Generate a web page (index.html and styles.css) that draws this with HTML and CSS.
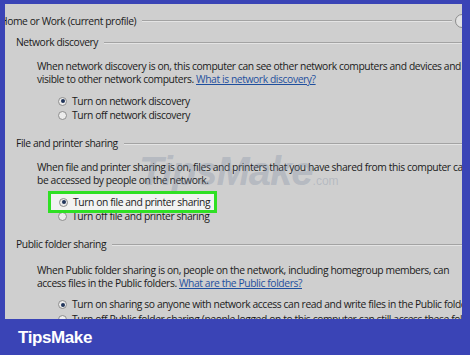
FILE: index.html
```html
<!DOCTYPE html>
<html lang="en">
<head>
    <meta charset="UTF-8">
    <title>Advanced sharing settings</title>
    <link rel="stylesheet" href="styles.css">
</head>
<body>
    <div class="frame">
        <div class="panel">
            <div class="profile-head">
                <span class="profile-title">Home or Work (current profile)</span>
                <span class="rule"></span>
                <span class="collapse"></span>
            </div>

            <div class="section">
                <div class="section-head">
                    <span>Network discovery</span>
                    <span class="rule"></span>
                </div>
                <p class="desc">When network discovery is on, this computer can see other network computers and devices and is<br>visible to other network computers. <a href="#">What is network discovery?</a></p>
                <div class="options">
                    <label class="option"><span class="radio checked"></span>Turn on network discovery</label>
                    <label class="option"><span class="radio"></span>Turn off network discovery</label>
                </div>
            </div>

            <div class="section">
                <div class="section-head">
                    <span>File and printer sharing</span>
                    <span class="rule"></span>
                </div>
                <p class="desc">When file and printer sharing is on, files and printers that you have shared from this computer can<br>be accessed by people on the network.</p>
                <div class="options tight">
                    <label class="option highlight"><span class="radio checked"></span>Turn on file and printer sharing</label>
                    <label class="option"><span class="radio"></span>Turn off file and printer sharing</label>
                </div>
                <div class="watermark">TipsMake<small>.com</small></div>
            </div>

            <div class="section public">
                <div class="section-head">
                    <span>Public folder sharing</span>
                    <span class="rule"></span>
                </div>
                <p class="desc">When Public folder sharing is on, people on the network, including homegroup members, can<br>access files in the Public folders. <a href="#">What are the Public folders?</a></p>
                <div class="options">
                    <label class="option"><span class="radio checked"></span>Turn on sharing so anyone with network access can read and write files in the Public folders</label>
                    <label class="option"><span class="radio"></span>Turn off Public folder sharing (people logged on to this computer can still access these folders)</label>
                </div>
            </div>
        </div>
    </div>
    <div class="brand">TipsMake</div>
</body>
</html>
```

FILE: styles.css
```css
* {
    margin: 0;
    padding: 0;
    box-sizing: border-box;
}

body {
    background: #3a44b6;
    font-family: 'Open Sans', 'Noto Sans', sans-serif;
    font-size: 10.3px;
    letter-spacing: -0.4px;
    line-height: 13px;
    color: #1b1b1b;
    width: 470px;
    height: 355px;
    overflow: hidden;
}

.frame {
    padding: 4px 8px 0 5px;
}

.panel {
    position: relative;
    height: 315px;
    background: #cfcfcf;
    overflow: hidden;
    padding-top: 10px;
}

.profile-head {
    display: flex;
    align-items: center;
    margin-left: -5px;
    white-space: nowrap;
}

.profile-title {
    padding-right: 6px;
}

.rule {
    flex: 1;
    height: 2px;
    border-top: 1px solid #a3a3a3;
    border-bottom: 1px solid #e4e4e4;
}

.collapse {
    width: 14px;
    height: 14px;
    margin-left: 3px;
    margin-right: -7px;
    border: 1px solid #8c8c8c;
    border-radius: 50%;
    background: #e2e2e2;
}

.section {
    position: relative;
    padding-left: 11px;
}

.section-head {
    display: flex;
    align-items: center;
    white-space: nowrap;
    margin-top: 8px;
}

.section-head span:first-child {
    padding-right: 6px;
}

.section + .section .section-head {
    margin-top: 15px;
}

.desc {
    margin: 11px 0 0 21px;
    white-space: nowrap;
}

.desc a {
    color: #1f4f9e;
    text-decoration: underline;
}

.options {
    margin: 8px 0 0 42px;
    display: flex;
    flex-direction: column;
}

.options.tight {
    margin-top: 8px;
}

.public .desc {
    margin-top: 13px;
}

.public .options {
    margin-top: 7px;
}

.public .option {
    height: 15px;
}

.option {
    display: flex;
    align-items: center;
    height: 14px;
    white-space: nowrap;
}

.radio {
    width: 9px;
    height: 9px;
    margin-right: 5px;
    border: 1px solid #8d8d8d;
    border-radius: 50%;
    background: #ececec;
    flex-shrink: 0;
    display: flex;
    align-items: center;
    justify-content: center;
}

.radio.checked::after {
    content: "";
    width: 4px;
    height: 4px;
    border-radius: 50%;
    background: #21355a;
}

.highlight {
    position: relative;
    z-index: 1;
    align-self: flex-start;
    height: 22px;
    margin: -4px 0 -4px -10px;
    padding: 0 4px 0 8px;
    border: 3px solid #2fe024;
    background: #f2f2f2;
}

.watermark {
    position: absolute;
    left: 134px;
    top: 14px;
    font-family: 'Liberation Sans', Arial, sans-serif;
    font-size: 40px;
    line-height: 40px;
    letter-spacing: -1px;
    font-weight: bold;
    font-style: italic;
    color: rgba(120, 135, 160, 0.3);
    pointer-events: none;
}

.watermark small {
    font-size: 12px;
    letter-spacing: 0;
    font-style: normal;
    font-weight: normal;
}

.brand {
    height: 36px;
    padding-left: 18px;
    display: flex;
    align-items: center;
    font-family: 'Liberation Sans', Arial, sans-serif;
    font-weight: bold;
    font-size: 17px;
    color: #fff;
}
```
